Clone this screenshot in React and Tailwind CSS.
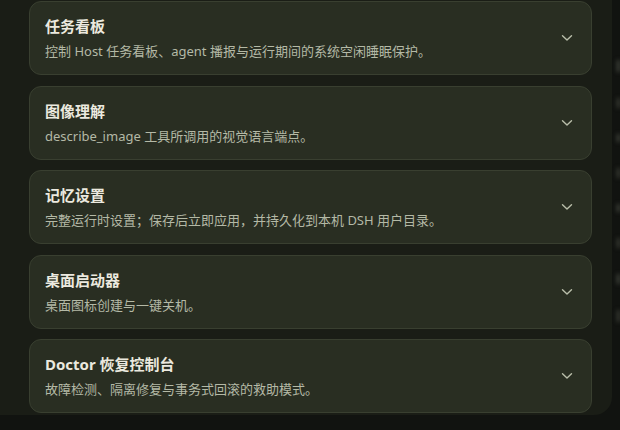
import React from "react";

const items = [
  { t: "任务看板", d: "控制 Host 任务看板、agent 播报与运行期间的系统空闲睡眠保护。" },
  { t: "图像理解", d: "describe_image 工具所调用的视觉语言端点。" },
  { t: "记忆设置", d: "完整运行时设置；保存后立即应用，并持久化到本机 DSH 用户目录。" },
  { t: "桌面启动器", d: "桌面图标创建与一键关机。" },
  { t: "Doctor 恢复控制台", d: "故障检测、隔离修复与事务式回滚的救助模式。" },
];

function Chevron() {
  return (
    <svg width="12" height="8" viewBox="0 0 12 8" className="shrink-0">
      <path d="M1.5 1.8 L6 6 L10.5 1.8" fill="none" stroke="#b9beaa" strokeWidth="1.4" strokeLinecap="round" strokeLinejoin="round" />
    </svg>
  );
}

export default function App() {
  return (
    <div
      className="w-[620px] h-[430px] bg-[#111310] flex overflow-hidden"
      style={{ fontFamily: '"Noto Sans", "Noto Sans CJK SC", sans-serif' }}
    >
      <div className="w-[612px] h-[415px] shrink-0 bg-[#1a1d16] rounded-br-[18px] flex flex-col gap-[10.5px] pl-[29px] pr-[20px] pt-[1px]">
        {items.map((it) => (
          <div
            key={it.t}
            className="h-[74px] shrink-0 rounded-[12px] border border-[#393f30] bg-[#292e22] flex items-center pl-[15px] pr-[18px]"
          >
            <div className="flex-1 flex flex-col gap-[4px]">
              <div className="text-[15px] leading-[22px] font-bold text-[#ebe9df]">{it.t}</div>
              <div className="text-[13px] leading-[20px] text-[#b4b9a6]">{it.d}</div>
            </div>
            <Chevron />
          </div>
        ))}
      </div>
      <div className="flex-1 flex flex-col gap-[26px] pt-[60px] pl-[5px]">
        <div className="h-[12px] bg-[#44473f] blur-[2px]" />
        <div className="h-[10px] bg-[#3c3f37] blur-[2px]" />
        <div className="h-[8px] bg-[#44473f] blur-[2px]" />
        <div className="h-[10px] bg-[#3c3f37] blur-[2px]" />
        <div className="h-[8px] bg-[#44473f] blur-[2px]" />
        <div className="h-[10px] bg-[#3c3f37] blur-[2px]" />
        <div className="h-[10px] bg-[#44473f] blur-[2px]" />
        <div className="h-[12px] bg-[#3c3f37] blur-[2px]" />
      </div>
    </div>
  );
}
